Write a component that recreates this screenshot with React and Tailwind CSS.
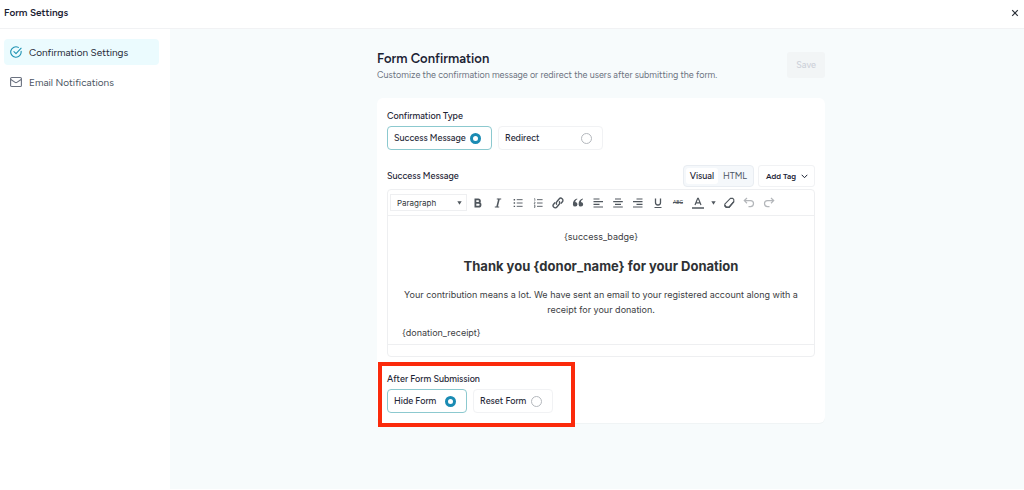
import { useState } from "react";

function RadioCard({ name, label, checked, onChange, className }) {
  return (
    <label
      className={`flex h-6 cursor-pointer items-center justify-between rounded border bg-white pr-2.5 pl-1.5 text-[9px] font-medium text-[#1f2937] ${
        checked ? "border-[#8cc9cf]" : "border-[#f1f2f4]"
      } ${className}`}
    >
      {label}
      <input
        type="radio"
        name={name}
        checked={checked}
        onChange={onChange}
        className="size-[11px] shrink-0 appearance-none rounded-full border border-[#b4b8bd] bg-white checked:border-[3px] checked:border-[#1a8bb3]"
      />
    </label>
  );
}

function ToolButton({ label, disabled, children, className = "w-5" }) {
  return (
    <button
      type="button"
      aria-label={label}
      disabled={disabled}
      className={`flex h-5 shrink-0 items-center justify-center text-[#50575e] disabled:text-[#b3b6ba] ${className}`}
    >
      {children}
    </button>
  );
}

function Icon({ children, className = "size-3", width = 1.2 }) {
  return (
    <svg
      viewBox="0 0 12 12"
      className={`shrink-0 ${className}`}
      fill="none"
      stroke="currentColor"
      strokeWidth={width}
      aria-hidden="true"
    >
      {children}
    </svg>
  );
}

function Toolbar() {
  return (
    <div className="flex h-[26px] items-center border-b border-[#eeeff1] pl-0.5">
      <div className="relative mr-px">
        <select
          aria-label="Block format"
          className="block h-[17px] w-[77px] appearance-none border border-[#eeeff1] bg-white pl-1.5 font-['Inter',sans-serif] text-[8px] text-[#32373c]"
        >
          <option>Paragraph</option>
          <option>Heading 2</option>
          <option>Heading 3</option>
        </select>
        <svg viewBox="0 0 6 5" className="pointer-events-none absolute top-[7px] right-[5px] h-1 w-[5px] fill-[#50575e]" aria-hidden="true">
          <path d="M0.3 0.3h5.4L3 4.8z" />
        </svg>
      </div>
      <ToolButton label="Bold">
        <Icon width={1.8}>
          <path d="M3.4 2.3h2.8a1.7 1.7 0 0 1 0 3.5H3.4zM3.4 5.8h3.2a1.9 1.9 0 0 1 0 3.9H3.4z" />
        </Icon>
      </ToolButton>
      <ToolButton label="Italic">
        <Icon width={1.2}>
          <path d="M4.8 2h4.4M2.8 10h4.4" />
          <path strokeWidth="1.6" d="M7 2 5 10" />
        </Icon>
      </ToolButton>
      <ToolButton label="Bulleted list">
        <Icon className="size-2.5" width={1.1}>
          <path d="M4.5 2H11.5M4.5 6H11.5M4.5 10H11.5" />
          <path strokeWidth="1.7" d="M0.8 2h1.7M0.8 6h1.7M0.8 10h1.7" />
        </Icon>
      </ToolButton>
      <ToolButton label="Numbered list">
        <Icon className="size-2.5" width={1.1}>
          <path d="M4.8 2H11.5M4.8 6H11.5M4.8 10H11.5" />
          <path strokeWidth="0.8" d="M1.3 0.8h.9v2.6M1.2 4.9h1.2v.8L1.2 7h1.5M1.2 8.7h1.2v2.6H1.2M1.5 10h.9" />
        </Icon>
      </ToolButton>
      <ToolButton label="Link">
        <Icon width={1.4}>
          <path d="M5 7.6a2 2 0 0 1-.2-2.9l2.3-2.7a2.1 2.1 0 0 1 3.3 2.7L8.8 6.6" />
          <path d="M7 4.4a2 2 0 0 1 .2 2.9L4.9 10a2.1 2.1 0 0 1-3.3-2.7L3.2 5.4" />
        </Icon>
      </ToolButton>
      <ToolButton label="Blockquote">
        <svg viewBox="0 0 12 12" className="size-3 fill-current" aria-hidden="true">
          <path d="M5.2 2.4C3.9 2.7 3.3 3.8 3.3 5a2.3 2.3 0 1 1-2.4 2.4C.7 4.4 2.5 2 5.2 1.5zM10.9 2.4C9.6 2.7 9 3.8 9 5a2.3 2.3 0 1 1-2.4 2.4C6.4 4.4 8.2 2 10.9 1.5z" />
        </svg>
      </ToolButton>
      <ToolButton label="Align left">
        <Icon width={1.2}>
          <path d="M1.5 2h6M1.5 4.7h9.5M1.5 7.3h6M1.5 10h9.5" />
        </Icon>
      </ToolButton>
      <ToolButton label="Align center">
        <Icon width={1.2}>
          <path d="M3 2h6M1.2 4.7h9.6M3 7.3h6M1.2 10h9.6" />
        </Icon>
      </ToolButton>
      <ToolButton label="Align right">
        <Icon width={1.2}>
          <path d="M4.5 2h6M1 4.7h9.5M4.5 7.3h6M1 10h9.5" />
        </Icon>
      </ToolButton>
      <ToolButton label="Underline">
        <Icon width={1.3}>
          <path d="M3.5 1.5v4a2.5 2.5 0 0 0 5 0v-4" />
          <path strokeWidth="1" d="M2.5 10.5h7" />
        </Icon>
      </ToolButton>
      <ToolButton label="Strikethrough">
        <span className="text-[5px] font-medium line-through">ABC</span>
      </ToolButton>
      <ToolButton label="Text color">
        <Icon width={1.2}>
          <path d="M3 8 5.7 1.3h.6L9 8M4 5.8h4" />
          <path strokeWidth="1.5" d="M0 11h12" />
        </Icon>
      </ToolButton>
      <ToolButton label="Choose text color" className="w-[11px]">
        <svg viewBox="0 0 6 5" className="h-1 w-[5px] fill-current" aria-hidden="true">
          <path d="M0.3 0.3h5.4L3 4.8z" />
        </svg>
      </ToolButton>
      <ToolButton label="Clear formatting">
        <Icon width={1.1}>
          <path strokeLinejoin="round" d="M7.4 1.4h2.4l1 1.2v2L6 10.4H3.2L1.8 9V7.2z" />
          <path strokeWidth="1.4" d="M1.8 8.3 3.3 10.2H6L10.9 4.6" />
        </Icon>
      </ToolButton>
      <ToolButton label="Undo" disabled>
        <Icon width={1.2}>
          <path d="M1.5 3.6h6a3 3 0 0 1 0 6H5.5M4 1 1.3 3.6 4 6.2" />
        </Icon>
      </ToolButton>
      <ToolButton label="Redo" disabled>
        <Icon width={1.2}>
          <path d="M10.5 3.6h-6a3 3 0 0 0 0 6h2M8 1l2.7 2.6L8 6.2" />
        </Icon>
      </ToolButton>
    </div>
  );
}

export default function App() {
  const [type, setType] = useState("message");
  const [after, setAfter] = useState("hide");

  return (
    <div className="flex min-h-screen flex-col bg-white pb-px font-['Figtree','Inter',sans-serif] text-[#1b2233]">
      <header className="flex h-[29px] shrink-0 items-center justify-between border-b border-[#f1f2f4] pr-[5px] pb-0.5 pl-1">
        <h1 className="text-[10px] leading-4 font-semibold">Form Settings</h1>
        <button type="button" aria-label="Close" className="flex size-2 items-center justify-center text-[#2b3038]">
          <svg viewBox="0 0 8 8" className="size-2" fill="none" stroke="currentColor" strokeWidth="1.2" aria-hidden="true">
            <path d="M1.2 1.2l5.6 5.6M6.8 1.2 1.2 6.8" />
          </svg>
        </button>
      </header>

      <div className="flex flex-1">
        <aside className="w-[170px] shrink-0 px-1 pt-2.5">
          <nav className="mr-[7px] flex flex-col gap-1 text-[10px]">
            <a href="#confirmation" aria-current="page" className="flex h-[26px] items-center gap-[7px] rounded bg-[#ebfbfe] px-1.5 text-[#1f2937]">
              <svg viewBox="0 0 14 14" className="size-3 text-[#1f93b3]" fill="none" stroke="currentColor" strokeWidth="1.3" strokeLinecap="round" strokeLinejoin="round" aria-hidden="true">
                <path d="M13 6.3A6.1 6.1 0 1 1 9.8 1.6" />
                <path d="M4.6 6.5 7 8.8l6-6.2" />
              </svg>
              Confirmation Settings
            </a>
            <a href="#email" className="flex h-[26px] items-center gap-[7px] rounded px-1.5 text-[#4b5563]">
              <svg viewBox="0 0 14 14" className="size-3 text-[#6b7280]" fill="none" stroke="currentColor" strokeWidth="1.3" strokeLinecap="round" strokeLinejoin="round" aria-hidden="true">
                <rect x="0.7" y="1.7" width="12.6" height="10.6" rx="1.3" />
                <path d="M1 4 6 7.4a1.8 1.8 0 0 0 2 0L13 4" />
              </svg>
              Email Notifications
            </a>
          </nav>
        </aside>

        <main className="flex-1 bg-[#f7fbfc] pt-[22px] pr-2 pb-8 pl-4">
          <div className="mx-auto max-w-[448px]">
            <div className="flex items-center justify-between">
              <div>
                <h2 className="text-[13px] leading-4 font-semibold">Form Confirmation</h2>
                <p className="text-[9px] leading-[15px] text-[#6b7280]">
                  Customize the confirmation message or redirect the users after submitting the form.
                </p>
              </div>
              <button type="button" disabled className="mb-[3px] h-[26px] rounded-[3px] bg-[#f2f5f6] px-[9px] text-[9px] font-medium text-[#cdd1d9]">
                Save
              </button>
            </div>

            <div className="mt-4 rounded-md bg-white p-2.5 shadow-[0_1px_1px_rgba(0,0,0,0.03)]">
              <fieldset>
                <legend className="text-[9px] leading-4 font-medium">Confirmation Type</legend>
                <div className="mt-0.5 flex gap-1.5">
                  <RadioCard name="type" label="Success Message" checked={type === "message"} onChange={() => setType("message")} className="w-[105px]" />
                  <RadioCard name="type" label="Redirect" checked={type === "redirect"} onChange={() => setType("redirect")} className="w-[105px]" />
                </div>
              </fieldset>

              <div className="mt-[15px] flex items-center justify-between">
                <span id="message-label" className="text-[9px] font-medium">Success Message</span>
                <div className="flex gap-1">
                  <div className="flex h-[22px] items-center gap-px rounded border border-[#e9edf2] bg-[#f5f8fb] px-0.5 text-[9px] text-[#4b5563]">
                    <button type="button" aria-pressed="true" className="h-4 rounded-[3px] bg-white px-1 font-medium text-[#1b2233]">Visual</button>
                    <button type="button" aria-pressed="false" className="h-4 px-1">HTML</button>
                  </div>
                  <button type="button" className="flex h-[22px] items-center gap-[5px] rounded-[3px] border border-[#f1f2f4] bg-white pr-1.5 pl-[7px] text-[8px] font-semibold">
                    Add Tag
                    <svg viewBox="0 0 7 5" className="h-[5px] w-[7px]" fill="none" stroke="currentColor" strokeWidth="1" aria-hidden="true">
                      <path d="M0.7 0.8 3.5 3.7 6.3 0.8" />
                    </svg>
                  </button>
                </div>
              </div>

              <div className="mt-0.5 rounded border border-[#eeeff1] text-[#3c4043]">
                <Toolbar />
                <div
                  role="textbox"
                  aria-multiline="true"
                  aria-labelledby="message-label"
                  className="border-b border-[#eeeff1] px-3.5 pt-[13px] pb-1 font-['Inter',sans-serif] text-[9px] leading-[15px]"
                >
                  <p className="text-center">{"{success_badge}"}</p>
                  <h3 className="mt-3 text-center text-[13px] leading-5 font-bold text-[#2f3235]">
                    {"Thank you {donor_name} for your Donation"}
                  </h3>
                  <p className="mt-[11px] text-center">
                    Your contribution means a lot. We have sent an email to your registered account along with a receipt for your donation.
                  </p>
                  <p className="mt-2">{"{donation_receipt}"}</p>
                </div>
                <div className="h-[11px]" />
              </div>

              <div className="relative mt-3.5">
                <fieldset>
                  <legend className="text-[9px] leading-4 font-medium">After Form Submission</legend>
                  <div className="mt-0.5 flex gap-1.5">
                    <RadioCard name="after" label="Hide Form" checked={after === "hide"} onChange={() => setAfter("hide")} className="w-20" />
                    <RadioCard name="after" label="Reset Form" checked={after === "reset"} onChange={() => setAfter("reset")} className="w-20" />
                  </div>
                </fieldset>
                <div className="pointer-events-none absolute -top-[9px] -bottom-3.5 -left-[9px] w-[197px] border-4 border-[#fb2a0b]" />
              </div>
            </div>
          </div>
        </main>
      </div>
    </div>
  );
}
